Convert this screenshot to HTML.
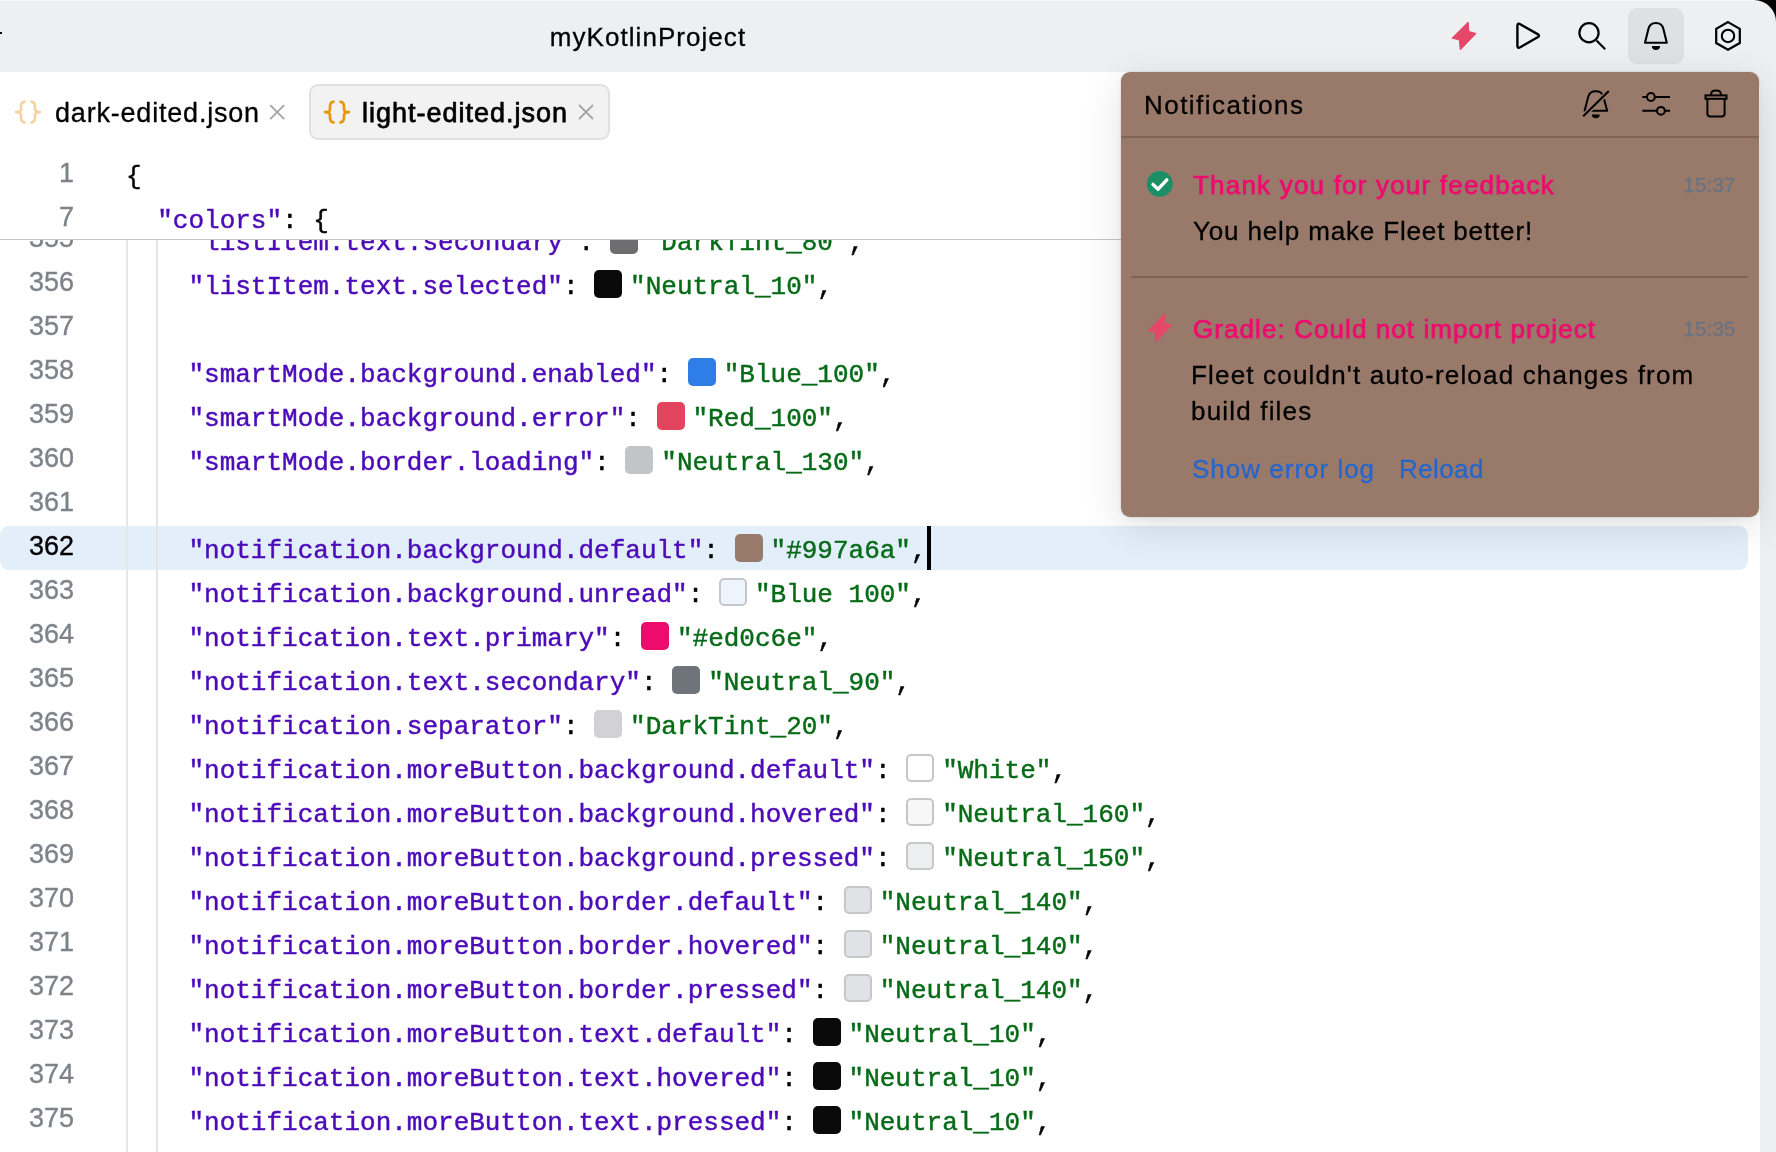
<!DOCTYPE html>
<html><head><meta charset="utf-8">
<style>
*{margin:0;padding:0;box-sizing:border-box}
html,body{width:1776px;height:1152px;overflow:hidden;background:#fff}
body{position:relative;font-family:"Liberation Sans",sans-serif;color:#000}
.abs{will-change:transform}
.abs{position:absolute}
#titlebar{left:0;top:0;width:1776px;height:72px;background:#eeeff1}
#title{left:0;width:1296px;top:16.5px;height:40px;line-height:40px;text-align:center;font-size:26px;letter-spacing:1.05px;-webkit-text-stroke:0.3px #000}
#rstrip{left:1760px;top:72px;width:16px;height:1080px;background:#eeeff1}
.tabtxt{top:92px;height:40px;line-height:40px;font-size:27px;white-space:nowrap}
.code{font-family:"Liberation Mono",monospace;font-size:26px;-webkit-text-stroke:0.45px currentColor;white-space:pre;height:44px;line-height:44px}
.ln{font-size:27px;color:#7d8389;-webkit-text-stroke:0.35px #7d8389;width:74px;text-align:right;height:44px;line-height:44px;left:0}
.k{color:#4c0bb9;-webkit-text-stroke-color:#4c0bb9}.v{color:#076b17;-webkit-text-stroke-color:#076b17}
.sw{display:inline-block;width:28px;height:28px;border-radius:5px;vertical-align:middle;margin-right:8px;position:relative;top:-3px}
.swb{border:2px solid #c6c7cb}
.guide{width:2px;background:#e6e6e8}
.ptxt{font-size:26px;height:40px;line-height:40px;white-space:nowrap;-webkit-text-stroke:0.3px currentColor}
.ttl{color:#ed0c6e;-webkit-text-stroke:0.75px #ed0c6e}
.tm{font-size:21px;color:#6a7380;-webkit-text-stroke:0.3px #6a7380}
.lnk{color:#2466cf}
</style></head><body>
<div id="titlebar" class="abs"></div>
<div id="title" class="abs">myKotlinProject</div>
<div id="rstrip" class="abs"></div>
<div class="abs" style="left:0;top:0;width:1760px;height:1px;background:#f8f9f9"></div>
<div class="abs" style="left:1748px;top:72px;width:12px;height:14px;background:#eeeff1"></div>

<!-- tabs -->
<div class="abs" style="left:309px;top:84px;width:301px;height:56px;border-radius:9px;background:#f2f2f3;border:2px solid #e1e1e3"></div>
<div class="abs tabtxt" style="left:55px;top:93px;letter-spacing:0.8px;-webkit-text-stroke:0.3px #000">dark-edited.json</div>
<div class="abs tabtxt" style="left:361.5px;top:93px;letter-spacing:1.0px;-webkit-text-stroke:0.75px #000">light-edited.json</div>

<svg class="abs" style="left:0;top:72px" width="640" height="80" viewBox="0 72 640 80">
  <g fill="none" stroke="#e8960a" stroke-width="2.7" stroke-linecap="butt" stroke-linejoin="round">
  <path d="M334.6,101.6 C331.2,101.6 330,103.2 330,106.4 L330,109.2 C330,111.1 328.8,112.1 325,112.1 C328.8,112.1 330,113.1 330,115 L330,117.8 C330,121 331.2,122.6 334.6,122.6"/>
  <path d="M339.4,101.6 C342.8,101.6 344,103.2 344,106.4 L344,109.2 C344,111.1 345.2,112.1 349,112.1 C345.2,112.1 344,113.1 344,115 L344,117.8 C344,121 342.8,122.6 339.4,122.6"/>
  </g>
  <g fill="none" stroke="#f3d59f" stroke-width="2.7" stroke-linecap="butt" stroke-linejoin="round" transform="translate(-309,0)">
  <path d="M334.6,101.6 C331.2,101.6 330,103.2 330,106.4 L330,109.2 C330,111.1 328.8,112.1 325,112.1 C328.8,112.1 330,113.1 330,115 L330,117.8 C330,121 331.2,122.6 334.6,122.6"/>
  <path d="M339.4,101.6 C342.8,101.6 344,103.2 344,106.4 L344,109.2 C344,111.1 345.2,112.1 349,112.1 C345.2,112.1 344,113.1 344,115 L344,117.8 C344,121 342.8,122.6 339.4,122.6"/>
  </g>
  <path d="M270.2,105.2 L284.2,119.2 M284.2,105.2 L270.2,119.2" stroke="#a6a6a8" stroke-width="1.9"/>
  <path d="M579,105 L593,119 M593,105 L579,119" stroke="#a6a6a8" stroke-width="1.9"/>
</svg>

<!-- current line -->
<div class="abs" style="left:0;top:526px;width:1748px;height:44px;background:#e3eefb;border-radius:9px"></div>

<!-- guides -->
<div class="abs guide" style="left:126px;top:240px;height:912px"></div>
<div class="abs guide" style="left:156px;top:240px;height:912px"></div>

<div class="abs ln" style="top:216px">355</div>
<div class="abs code" style="left:125.6px;top:221px">    <span class="k">"listItem.text.secondary"</span>: <span class="sw" style="background:#6e6e70"></span><span class="v">"DarkTint_80"</span>,</div>
<div class="abs ln" style="top:260px">356</div>
<div class="abs code" style="left:125.6px;top:265px">    <span class="k">"listItem.text.selected"</span>: <span class="sw" style="background:#0a0a0a"></span><span class="v">"Neutral_10"</span>,</div>
<div class="abs ln" style="top:304px">357</div>
<div class="abs ln" style="top:348px">358</div>
<div class="abs code" style="left:125.6px;top:353px">    <span class="k">"smartMode.background.enabled"</span>: <span class="sw" style="background:#2f7ee8"></span><span class="v">"Blue_100"</span>,</div>
<div class="abs ln" style="top:392px">359</div>
<div class="abs code" style="left:125.6px;top:397px">    <span class="k">"smartMode.background.error"</span>: <span class="sw" style="background:#e3445e"></span><span class="v">"Red_100"</span>,</div>
<div class="abs ln" style="top:436px">360</div>
<div class="abs code" style="left:125.6px;top:441px">    <span class="k">"smartMode.border.loading"</span>: <span class="sw" style="background:#c3c4c8"></span><span class="v">"Neutral_130"</span>,</div>
<div class="abs ln" style="top:480px">361</div>
<div class="abs ln" style="top:524px;color:#000;-webkit-text-stroke-color:#000">362</div>
<div class="abs code" style="left:125.6px;top:529px">    <span class="k">"notification.background.default"</span>: <span class="sw" style="background:#997a6a"></span><span class="v">"#997a6a"</span>,</div>
<div class="abs ln" style="top:568px">363</div>
<div class="abs code" style="left:125.6px;top:573px">    <span class="k">"notification.background.unread"</span>: <span class="sw swb" style="background:#eef4fc"></span><span class="v">"Blue 100"</span>,</div>
<div class="abs ln" style="top:612px">364</div>
<div class="abs code" style="left:125.6px;top:617px">    <span class="k">"notification.text.primary"</span>: <span class="sw" style="background:#ed0c6e"></span><span class="v">"#ed0c6e"</span>,</div>
<div class="abs ln" style="top:656px">365</div>
<div class="abs code" style="left:125.6px;top:661px">    <span class="k">"notification.text.secondary"</span>: <span class="sw" style="background:#6f737a"></span><span class="v">"Neutral_90"</span>,</div>
<div class="abs ln" style="top:700px">366</div>
<div class="abs code" style="left:125.6px;top:705px">    <span class="k">"notification.separator"</span>: <span class="sw" style="background:#d2d2d4"></span><span class="v">"DarkTint_20"</span>,</div>
<div class="abs ln" style="top:744px">367</div>
<div class="abs code" style="left:125.6px;top:749px">    <span class="k">"notification.moreButton.background.default"</span>: <span class="sw swb" style="background:#ffffff"></span><span class="v">"White"</span>,</div>
<div class="abs ln" style="top:788px">368</div>
<div class="abs code" style="left:125.6px;top:793px">    <span class="k">"notification.moreButton.background.hovered"</span>: <span class="sw swb" style="background:#f7f7f8"></span><span class="v">"Neutral_160"</span>,</div>
<div class="abs ln" style="top:832px">369</div>
<div class="abs code" style="left:125.6px;top:837px">    <span class="k">"notification.moreButton.background.pressed"</span>: <span class="sw swb" style="background:#eeeff1"></span><span class="v">"Neutral_150"</span>,</div>
<div class="abs ln" style="top:876px">370</div>
<div class="abs code" style="left:125.6px;top:881px">    <span class="k">"notification.moreButton.border.default"</span>: <span class="sw swb" style="background:#e1e2e5"></span><span class="v">"Neutral_140"</span>,</div>
<div class="abs ln" style="top:920px">371</div>
<div class="abs code" style="left:125.6px;top:925px">    <span class="k">"notification.moreButton.border.hovered"</span>: <span class="sw swb" style="background:#e1e2e5"></span><span class="v">"Neutral_140"</span>,</div>
<div class="abs ln" style="top:964px">372</div>
<div class="abs code" style="left:125.6px;top:969px">    <span class="k">"notification.moreButton.border.pressed"</span>: <span class="sw swb" style="background:#e1e2e5"></span><span class="v">"Neutral_140"</span>,</div>
<div class="abs ln" style="top:1008px">373</div>
<div class="abs code" style="left:125.6px;top:1013px">    <span class="k">"notification.moreButton.text.default"</span>: <span class="sw" style="background:#0a0a0a"></span><span class="v">"Neutral_10"</span>,</div>
<div class="abs ln" style="top:1052px">374</div>
<div class="abs code" style="left:125.6px;top:1057px">    <span class="k">"notification.moreButton.text.hovered"</span>: <span class="sw" style="background:#0a0a0a"></span><span class="v">"Neutral_10"</span>,</div>
<div class="abs ln" style="top:1096px">375</div>
<div class="abs code" style="left:125.6px;top:1101px">    <span class="k">"notification.moreButton.text.pressed"</span>: <span class="sw" style="background:#0a0a0a"></span><span class="v">"Neutral_10"</span>,</div>

<div class="abs" style="left:926.5px;top:526px;width:3.5px;height:44px;background:#000"></div>
<div class="abs" style="left:0;top:150px;width:1760px;height:89px;background:#fff"></div>
<div class="abs" style="left:0;top:238.8px;width:1121px;height:1.4px;background:#c4c5c9"></div>
<div class="abs ln" style="top:151px">1</div>
<div class="abs code" style="left:125.6px;top:155px">{</div>
<div class="abs ln" style="top:195px">7</div>
<div class="abs code" style="left:125.6px;top:199px">  <span class="k">"colors"</span>: {</div>
<!-- titlebar icons -->
<div class="abs" style="left:1628px;top:8px;width:56px;height:56px;border-radius:9px;background:#dfe0e2"></div>
<svg class="abs" style="left:0;top:0" width="1776" height="72" viewBox="0 0 1776 72">
  <path d="M1468.2,22 L1452,38.2 L1459.3,39.9 L1460.3,50 L1476,33.5 L1468.9,31.5 Z" fill="#e5476a" stroke="#e5476a" stroke-width="1" stroke-linejoin="round"/>
  <path d="M1517.4,25.8 Q1517.4,22.6 1520.2,24.2 L1537.6,34.1 Q1540.4,35.7 1537.6,37.3 L1520.2,47.2 Q1517.4,48.8 1517.4,45.6 Z" fill="none" stroke="#000" stroke-width="2.4" stroke-linejoin="round"/>
  <circle cx="1589" cy="32.8" r="9.6" fill="none" stroke="#000" stroke-width="2.2"/>
  <path d="M1596.5,40.5 L1605.2,49.2" stroke="#000" stroke-width="2.2"/>
  <path d="M1645,42.8 L1648.4,29 C1649.3,25 1652.3,23 1655.9,23 C1659.5,23 1662.5,25 1663.4,29 L1666.8,42.8 Z" fill="none" stroke="#000" stroke-width="2.1" stroke-linejoin="round"/>
  <path d="M1651.9,46 L1660,46 A4.05,4 0 0 1 1651.9,46 Z" fill="#000"/>
  <path d="M1728,22.1 L1739.8,28.8 L1739.8,43 L1728,49.7 L1716.2,43 L1716.2,28.8 Z" fill="none" stroke="#000" stroke-width="2.2"/>
  <circle cx="1728" cy="35.9" r="6.2" fill="none" stroke="#000" stroke-width="2.1"/>
  <path d="M1754,0 L1776,0 L1776,22 A22,22 0 0 0 1754,0 Z" fill="#000"/>
</svg>
<div class="abs" style="left:0;top:32px;width:2px;height:2px;background:#000"></div>

<!-- notifications panel -->
<div class="abs" style="left:1121px;top:72px;width:638px;height:444.5px;border-radius:9px;background:#997a6a;box-shadow:0 0 0 1px rgba(0,0,0,0.05),0 2px 8px rgba(0,0,0,0.05),0 10px 40px rgba(0,0,0,0.12)"></div>
<div class="abs" style="left:1121px;top:136px;width:638px;height:2px;background:#7f6558"></div>
<div class="abs" style="left:1131px;top:276px;width:617px;height:2px;background:#7f6558"></div>
<div class="abs ptxt" style="left:1143.5px;top:85px;letter-spacing:1.45px">Notifications</div>
<div class="abs ptxt ttl" style="left:1193px;top:165px;letter-spacing:1.2px">Thank you for your feedback</div>
<div class="abs ptxt tm" style="left:1683px;top:165px">15:37</div>
<div class="abs ptxt" style="left:1193px;top:211px;letter-spacing:0.85px">You help make Fleet better!</div>
<div class="abs ptxt ttl" style="left:1192.5px;top:309px;letter-spacing:1.08px">Gradle: Could not import project</div>
<div class="abs ptxt tm" style="left:1683px;top:309px">15:35</div>
<div class="abs ptxt" style="left:1191px;top:355px;letter-spacing:1.18px">Fleet couldn't auto-reload changes from</div>
<div class="abs ptxt" style="left:1191px;top:391px;letter-spacing:1.18px">build files</div>
<div class="abs ptxt lnk" style="left:1192px;top:449px;letter-spacing:1.0px">Show error log</div>
<div class="abs ptxt lnk" style="left:1398.5px;top:449px;letter-spacing:0.4px">Reload</div>
<svg class="abs" style="left:1121px;top:72px" width="640" height="300" viewBox="1121 72 640 300">
  <circle cx="1159.8" cy="183.9" r="12.9" fill="#1a8f66"/>
  <path d="M1153,184.4 L1158.1,189.2 L1166.8,179.8" fill="none" stroke="#fff" stroke-width="3.4" stroke-linecap="round" stroke-linejoin="round"/>
  <path d="M1164.4,314.3 L1148.2,330.8 L1155.5,332.3 L1155.6,342.3 L1171.6,325 L1164.6,323.5 Z" fill="#e5476a" stroke="#e5476a" stroke-width="1" stroke-linejoin="round"/>
  <!-- bell off -->
  <path d="M1584.6,110.8 L1588.3,96.5 C1589.3,93.2 1592,91.3 1595.8,91.3 C1599.6,91.3 1602.3,93.2 1603.3,96.5 L1607.2,110.8 Z" fill="none" stroke="#000" stroke-width="2" stroke-linejoin="round"/>
  <path d="M1591.8,114.6 L1599.8,114.6 A4,3.6 0 0 1 1591.8,114.6 Z" fill="#000"/>
  <path d="M1581.5,118 L1610.5,89.5" stroke="#997a6a" stroke-width="5"/>
  <path d="M1583.2,116.2 L1608.8,91" stroke="#000" stroke-width="2.1"/>
  <!-- sliders -->
  <path d="M1642.3,97 L1647,97 M1654.8,97 L1670,97 M1642.3,110.8 L1657,110.8 M1664.8,110.8 L1670,110.8" stroke="#000" stroke-width="2"/>
  <circle cx="1650.9" cy="97" r="3.9" fill="none" stroke="#000" stroke-width="2"/>
  <circle cx="1660.9" cy="110.8" r="3.9" fill="none" stroke="#000" stroke-width="2"/>
  <!-- trash -->
  <rect x="1705.5" y="95.4" width="21" height="3.4" fill="none" stroke="#000" stroke-width="2"/>
  <path d="M1711.2,95.4 L1711.2,94 C1711.2,91.5 1713,90.6 1716,90.6 C1719,90.6 1720.8,91.5 1720.8,94 L1720.8,95.4" fill="none" stroke="#000" stroke-width="2"/>
  <path d="M1707.4,98.8 L1707.4,113.5 C1707.4,115.4 1708.4,116.4 1710.3,116.4 L1721.7,116.4 C1723.6,116.4 1724.6,115.4 1724.6,113.5 L1724.6,98.8" fill="none" stroke="#000" stroke-width="2"/>
</svg>

</body></html>
